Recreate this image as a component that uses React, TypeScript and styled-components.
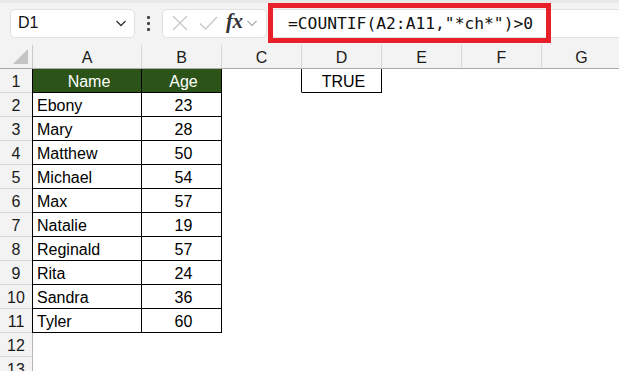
import React from "react";
import styled, { createGlobalStyle } from "styled-components";

const Global = createGlobalStyle`
  html, body { margin: 0; padding: 0; background: #ffffff; overflow: hidden; }
  body { font-family: "Liberation Sans", Arial, sans-serif; }
  * { box-sizing: border-box; }
`;

const Page = styled.div`
  width: 619px;
  height: 371px;
  overflow: hidden;
  background: #fff;
  display: flex;
  flex-direction: column;
`;

const Toolbar = styled.div`
  height: 45px;
  flex: none;
  background: #f3f3f3;
  border-top: 3px solid #e9e9e9;
  display: flex;
  align-items: center;
  padding: 0 0 2px 10px;
  overflow: hidden;
`;

const NameBox = styled.div`
  flex: none;
  width: 125px;
  height: 29px;
  background: #fff;
  border: 1px solid #e1e1e1;
  border-radius: 5px;
  display: flex;
  align-items: center;
  justify-content: space-between;
  padding: 0 6px 0 7px;
  font-size: 16px;
  color: #111;
`;

const Dots = styled.div`
  flex: none;
  width: 27px;
  display: flex;
  flex-direction: column;
  align-items: center;
  gap: 3px;
  span {
    width: 3px;
    height: 3px;
    background: #444;
    border-radius: 1px;
  }
`;

const FuncBox = styled.div`
  flex: none;
  width: 105px;
  height: 29px;
  background: #fff;
  border: 1px solid #e1e1e1;
  border-radius: 5px;
  display: flex;
  align-items: center;
  padding: 0 0 0 5px;
`;

const Fx = styled.span`
  font-family: "Liberation Serif", "Times New Roman", serif;
  font-style: italic;
  font-weight: bold;
  font-size: 21px;
  color: #333;
  margin: -3px 3px 0 6px;
  letter-spacing: -0.5px;
`;

const FormulaWrap = styled.div`
  position: relative;
  flex: 1;
  min-width: 0;
  margin-left: 4px;
  height: 29px;
`;

const FormulaInput = styled.div`
  height: 100%;
  width: calc(100% + 10px);
  background: #fff;
  border: 1px solid #e1e1e1;
  border-radius: 5px 0 0 5px;
  display: flex;
  align-items: center;
  padding-left: 16px;
  font-family: "DejaVu Sans Mono", "Liberation Mono", monospace;
  font-size: 16.3px;
  color: #111;
  white-space: pre;
`;

const Highlight = styled.div`
  position: absolute;
  left: -3px;
  top: -6px;
  width: 283px;
  height: 40px;
  border: 5px solid #e8202a;
  pointer-events: none;
`;

const Sheet = styled.div`
  display: grid;
  grid-template-columns: 33px 109px repeat(6, 80px);
  grid-auto-rows: 24px;
`;

const Corner = styled.div`
  background: #f3f3f3;
  border-right: 1px solid #c9c9c9;
  border-bottom: 1px solid #a9a9a9;
  position: relative;
  &::after {
    content: "";
    position: absolute;
    right: 4px;
    bottom: 4px;
    width: 0;
    height: 0;
    border-left: 15px solid transparent;
    border-bottom: 15px solid #c4c4c4;
  }
`;

const ColHead = styled.div`
  background: #f3f3f3;
  border-right: 1px solid #d6d6d6;
  border-bottom: 1px solid #a9a9a9;
  display: flex;
  align-items: center;
  justify-content: center;
  font-size: 16px;
  color: #1a1a1a;
  padding-top: 3px;
`;

const RowHead = styled.div`
  background: #f3f3f3;
  border-right: 1px solid #b5b5b5;
  border-bottom: 1px solid #d6d6d6;
  display: flex;
  align-items: center;
  justify-content: center;
  font-size: 16px;
  color: #1a1a1a;
  padding-top: 3px;
`;

const Cell = styled.div<{ $br?: boolean; $bb?: boolean; $bl?: boolean; $head?: boolean; $align?: string }>`
  background: ${(p) => (p.$head ? "#2c5418" : "#fff")};
  color: ${(p) => (p.$head ? "#fff" : "#000")};
  border-right: 1px solid ${(p) => (p.$br ? "#000" : "#fff")};
  border-bottom: 1px solid ${(p) => (p.$bb ? "#000" : "#fff")};
  box-shadow: ${(p) => (p.$bl ? "-1px 0 0 #000" : "none")};
  display: flex;
  align-items: center;
  justify-content: ${(p) => p.$align || "flex-start"};
  padding: 3px 0 0 4px;
  font-size: 16px;
  white-space: nowrap;
  overflow: hidden;
`;

const data: [string, string][] = [
  ["Ebony", "23"],
  ["Mary", "28"],
  ["Matthew", "50"],
  ["Michael", "54"],
  ["Max", "57"],
  ["Natalie", "19"],
  ["Reginald", "57"],
  ["Rita", "24"],
  ["Sandra", "36"],
  ["Tyler", "60"],
];

const cols = ["A", "B", "C", "D", "E", "F", "G"];

export default function App() {
  const rows: React.ReactNode[] = [];
  for (let r = 1; r <= 13; r++) {
    rows.push(<RowHead key={`rh${r}`}>{r}</RowHead>);
    const inTable = r <= 11;
    const d = r >= 2 && r <= 11 ? data[r - 2] : null;
    rows.push(
      <Cell
        key={`a${r}`}
        $br={inTable}
        $bb={inTable}
        $bl={inTable}
        $head={r === 1}
        $align={r === 1 ? "center" : "flex-start"}
      >
        {r === 1 ? "Name" : d ? d[0] : ""}
      </Cell>
    );
    rows.push(
      <Cell key={`b${r}`} $br={inTable} $bb={inTable} $head={r === 1} $align="center">
        {r === 1 ? "Age" : d ? d[1] : ""}
      </Cell>
    );
    rows.push(<Cell key={`c${r}`} $br={r === 1} />);
    rows.push(
      <Cell key={`d${r}`} $br={r === 1} $bb={r === 1} $align="center">
        {r === 1 ? "TRUE" : ""}
      </Cell>
    );
    rows.push(<Cell key={`e${r}`} />);
    rows.push(<Cell key={`f${r}`} />);
    rows.push(<Cell key={`g${r}`} />);
  }

  return (
    <Page>
      <Global />
      <Toolbar>
        <NameBox>
          <span>D1</span>
          <svg width="14" height="14" viewBox="0 0 14 14">
            <path d="M2.5 5 L7 9.5 L11.5 5" fill="none" stroke="#333" strokeWidth="1.3" />
          </svg>
        </NameBox>
        <Dots>
          <span />
          <span />
          <span />
        </Dots>
        <FuncBox>
          <svg width="20" height="20" viewBox="0 0 20 20" style={{ marginLeft: 2 }}>
            <path d="M3 3 L17 17 M17 3 L3 17" stroke="#c8c8c8" strokeWidth="1.4" fill="none" />
          </svg>
          <svg width="22" height="20" viewBox="0 0 22 20" style={{ marginLeft: 8 }}>
            <path d="M2 10.5 L7.5 16 L19 4" stroke="#c8c8c8" strokeWidth="1.4" fill="none" />
          </svg>
          <Fx>fx</Fx>
          <svg width="12" height="12" viewBox="0 0 12 12">
            <path d="M1.5 4 L6 8.5 L10.5 4" fill="none" stroke="#aaa" strokeWidth="1.2" />
          </svg>
        </FuncBox>
        <FormulaWrap>
          <FormulaInput>{'=COUNTIF(A2:A11,"*ch*")>0'}</FormulaInput>
          <Highlight />
        </FormulaWrap>
      </Toolbar>
      <Sheet>
        <Corner />
        {cols.map((c) => (
          <ColHead key={c}>{c}</ColHead>
        ))}
        {rows}
      </Sheet>
    </Page>
  );
}
